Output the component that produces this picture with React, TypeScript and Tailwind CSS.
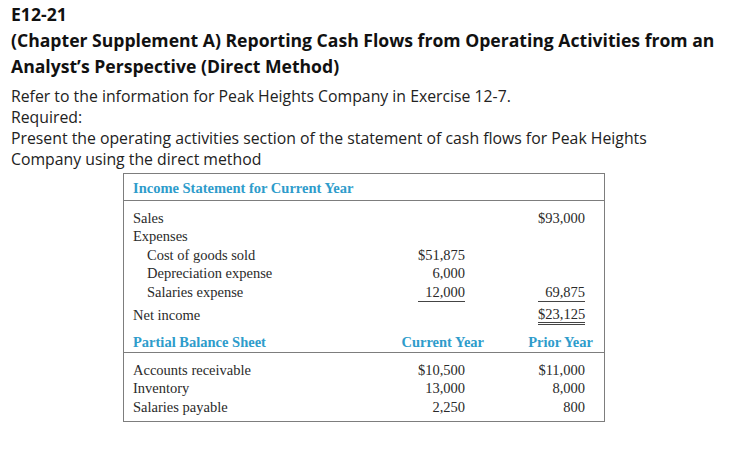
import React from "react";

// E12-21 exercise page: prompt text above, the data table below.

const serif = { fontFamily: '"Liberation Serif", "Times New Roman", serif' };

type Row = {
  label: string;
  indent?: boolean;
  mid?: string;
  right?: string;
  midLine?: boolean;
  rightLine?: "single" | "double";
};

const incomeRows: Row[] = [
  { label: "Sales", right: "$93,000" },
  { label: "Expenses" },
  { label: "Cost of goods sold", indent: true, mid: "$51,875" },
  { label: "Depreciation expense", indent: true, mid: "6,000" },
  { label: "Salaries expense", indent: true, mid: "12,000", midLine: true, right: "69,875", rightLine: "single" },
];

const balanceRows: Row[] = [
  { label: "Accounts receivable", mid: "$10,500", right: "$11,000" },
  { label: "Inventory", mid: "13,000", right: "8,000" },
  { label: "Salaries payable", mid: "2,250", right: "800" },
];

function Amount({ value, line }: { value?: string; line?: "single" | "double" }) {
  if (!value) return null;
  if (!line) return <span>{value}</span>;
  return (
    <span
      className={
        line === "double"
          ? "inline-block w-[47px] border-b-[3px] border-double border-[#444] leading-[16px] text-right"
          : "inline-block w-[47px] border-b border-[#444] pb-[1px] leading-[16px] text-right"
      }
    >
      {value}
    </span>
  );
}

function TableRow({ row }: { row: Row }) {
  return (
    <div className="grid h-[18.5px] grid-cols-[252px_80px_120px] items-center">
      <span className={row.indent ? "pl-[14px]" : ""}>{row.label}</span>
      <span className="text-right">
        <Amount value={row.mid} line={row.midLine ? "single" : undefined} />
      </span>
      <span className="text-right">
        <Amount value={row.right} line={row.rightLine} />
      </span>
    </div>
  );
}

export default function App() {
  return (
    <div className="h-[450px] w-[743px] bg-white text-[#111]">
      <div className="pl-[11px] pt-[1px]" style={{ fontFamily: '"Open Sans", "Noto Sans", sans-serif' }}>
        <div className="text-[17.6px] font-bold leading-[26px]">
          <p>E12-21</p>
          <p>(Chapter Supplement A) Reporting Cash Flows from Operating Activities from an</p>
          <p>Analyst’s Perspective (Direct Method)</p>
        </div>
        <div className="mt-[6.5px] text-[15.8px] leading-[21px] text-[#222]">
          <p>Refer to the information for Peak Heights Company in Exercise 12-7.</p>
          <p>Required:</p>
          <p>Present the operating activities section of the statement of cash flows for Peak Heights</p>
          <p>Company using the direct method</p>
        </div>
      </div>

      <div
        className="ml-[123px] mt-[3px] w-[482px] border border-[#7d7d7d] text-[14.5px] leading-[18px] text-[#2a2a2a]"
        style={serif}
      >
        <div className="flex h-[27px] items-end border-b border-[#7d7d7d] pb-[3px] pl-[9px]">
          <span className="font-bold text-[#2e9ccb]">Income Statement for Current Year</span>
        </div>

        <div className="pl-[9px] pt-[8px]">
          {incomeRows.map((r) => (
            <TableRow key={r.label} row={r} />
          ))}
          <div className="mt-[4px] grid h-[18.5px] grid-cols-[252px_80px_120px] items-center">
            <span>Net income</span>
            <span />
            <span className="text-right">
              <Amount value="$23,125" line="double" />
            </span>
          </div>
          <div className="mt-[8px] flex h-[20px] items-center font-bold text-[#2e9ccb]">
            <span className="w-[260px]">Partial Balance Sheet</span>
            <span className="w-[91px] text-right">Current Year</span>
            <span className="w-[109px] text-right">Prior Year</span>
          </div>
        </div>

        <div className="border-t border-[#7d7d7d] pb-[5px] pl-[9px] pt-[8px]">
          {balanceRows.map((r) => (
            <TableRow key={r.label} row={r} />
          ))}
        </div>
      </div>
    </div>
  );
}
